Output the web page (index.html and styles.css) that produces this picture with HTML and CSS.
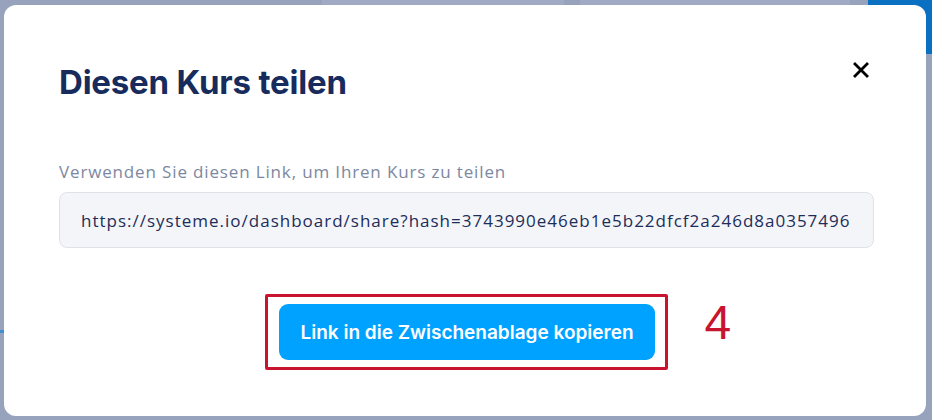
FILE: index.html
```html
<!DOCTYPE html>
<html lang="de">
<head>
<meta charset="UTF-8">
<meta name="viewport" content="width=device-width, initial-scale=1.0">
<title>Kurs teilen</title>
<link rel="stylesheet" href="styles.css">
</head>
<body>

<div class="page">
    <div class="page-bar">
        <div class="page-card card-one"></div>
        <div class="page-card card-two"></div>
        <div class="page-action"></div>
    </div>
    <div class="page-mark"></div>
</div>

<div class="overlay">
    <div class="modal">
        <div class="modal-head">
            <h2 class="modal-title">Diesen Kurs teilen</h2>
            <button class="close-button" aria-label="Schließen">
                <svg width="16" height="16" viewBox="0 0 16 16">
                    <path d="M2 2 L14 14 M14 2 L2 14" stroke="#000" stroke-width="2.8" stroke-linecap="square"/>
                </svg>
            </button>
        </div>
        <label class="field-label" for="shareLink">Verwenden Sie diesen Link, um Ihren Kurs zu teilen</label>
        <input type="text" id="shareLink" class="field-input" readonly value="https://systeme.io/dashboard/share?hash=3743990e46eb1e5b22dfcf2a246d8a0357496">
        <div class="modal-actions">
            <div class="highlight">
                <button class="copy-button">Link in die Zwischenablage kopieren</button>
                <span class="step-number">4</span>
            </div>
        </div>
    </div>
</div>

</body>
</html>
```

FILE: styles.css
```css
body {
    margin: 0;
    padding: 0;
    background-color: #97a3bd;
    font-family: Inter, "Noto Sans", sans-serif;
    height: 420px;
    overflow: hidden;
}

/* page behind the overlay */
.page {
    height: 420px;
    position: relative;
}
.page-bar {
    display: flex;
    height: 54px;
}
.page-card {
    height: 20px;
    background-color: #a0aac4;
    border-radius: 0 0 14px 14px;
}
.card-one {
    margin-left: 322px;
    width: 242px;
}
.card-two {
    margin-left: 16px;
    width: 270px;
}
.page-action {
    margin-left: auto;
    width: 64px;
    background-color: #0a70c2;
    border-radius: 0 0 0 6px;
}
.page-mark {
    position: absolute;
    left: 0;
    top: 330px;
    width: 4px;
    height: 3px;
    background-color: #3f8fd0;
}

/* Popup */
.overlay {
    position: fixed;
    top: 0;
    left: 0;
    right: 0;
    bottom: 0;
    padding: 5px 6px 4px 4px;
}
.modal {
    background-color: #fff;
    border-radius: 12px;
    height: 100%;
    box-sizing: border-box;
    padding: 56px 52px 0 55px;
}
.modal-head {
    display: flex;
    align-items: center;
    justify-content: space-between;
    height: 42px;
}
.modal-title {
    margin: 0;
    font-size: 33px;
    font-weight: 700;
    color: #172b5c;
    letter-spacing: -0.2px;
}
.close-button {
    background: none;
    border: none;
    padding: 0;
    width: 16px;
    height: 16px;
    margin-right: 5px;
    margin-top: -24px;
    cursor: pointer;
}
.field-label {
    display: block;
    margin-top: 57px;
    font-family: "Open Sans", "Noto Sans", sans-serif;
    font-size: 17px;
    line-height: 24px;
    color: #7c88a1;
    letter-spacing: 0.85px;
}
.field-input {
    display: block;
    margin-top: 8px;
    width: 100%;
    box-sizing: border-box;
    height: 56px;
    padding: 0 21px;
    background-color: #f4f5f8;
    border: 1px solid #dfe3e9;
    border-radius: 8px;
    font-family: "Open Sans", "Noto Sans", sans-serif;
    font-size: 17px;
    color: #1c2d5a;
    letter-spacing: 1px;
    outline: none;
}
.modal-actions {
    display: flex;
    justify-content: center;
    margin-top: 46px;
}
.highlight {
    position: relative;
    border: 3px solid #c8142f;
    border-radius: 2px;
    padding: 7px 10px 7px 11px;
}
.copy-button {
    display: block;
    background-color: #00a2ff;
    color: #fff;
    border: none;
    border-radius: 9px;
    height: 56px;
    padding: 0 21px;
    font-family: Inter, "Noto Sans", sans-serif;
    font-size: 19px;
    font-weight: 600;
    cursor: pointer;
}
/* annotation next to the box */
.step-number {
    position: absolute;
    left: 100%;
    top: 2px;
    margin-left: 40px;
    font-family: "Liberation Sans", Arial, sans-serif;
    font-size: 48px;
    color: #c8142f;
    line-height: 1;
}
```
